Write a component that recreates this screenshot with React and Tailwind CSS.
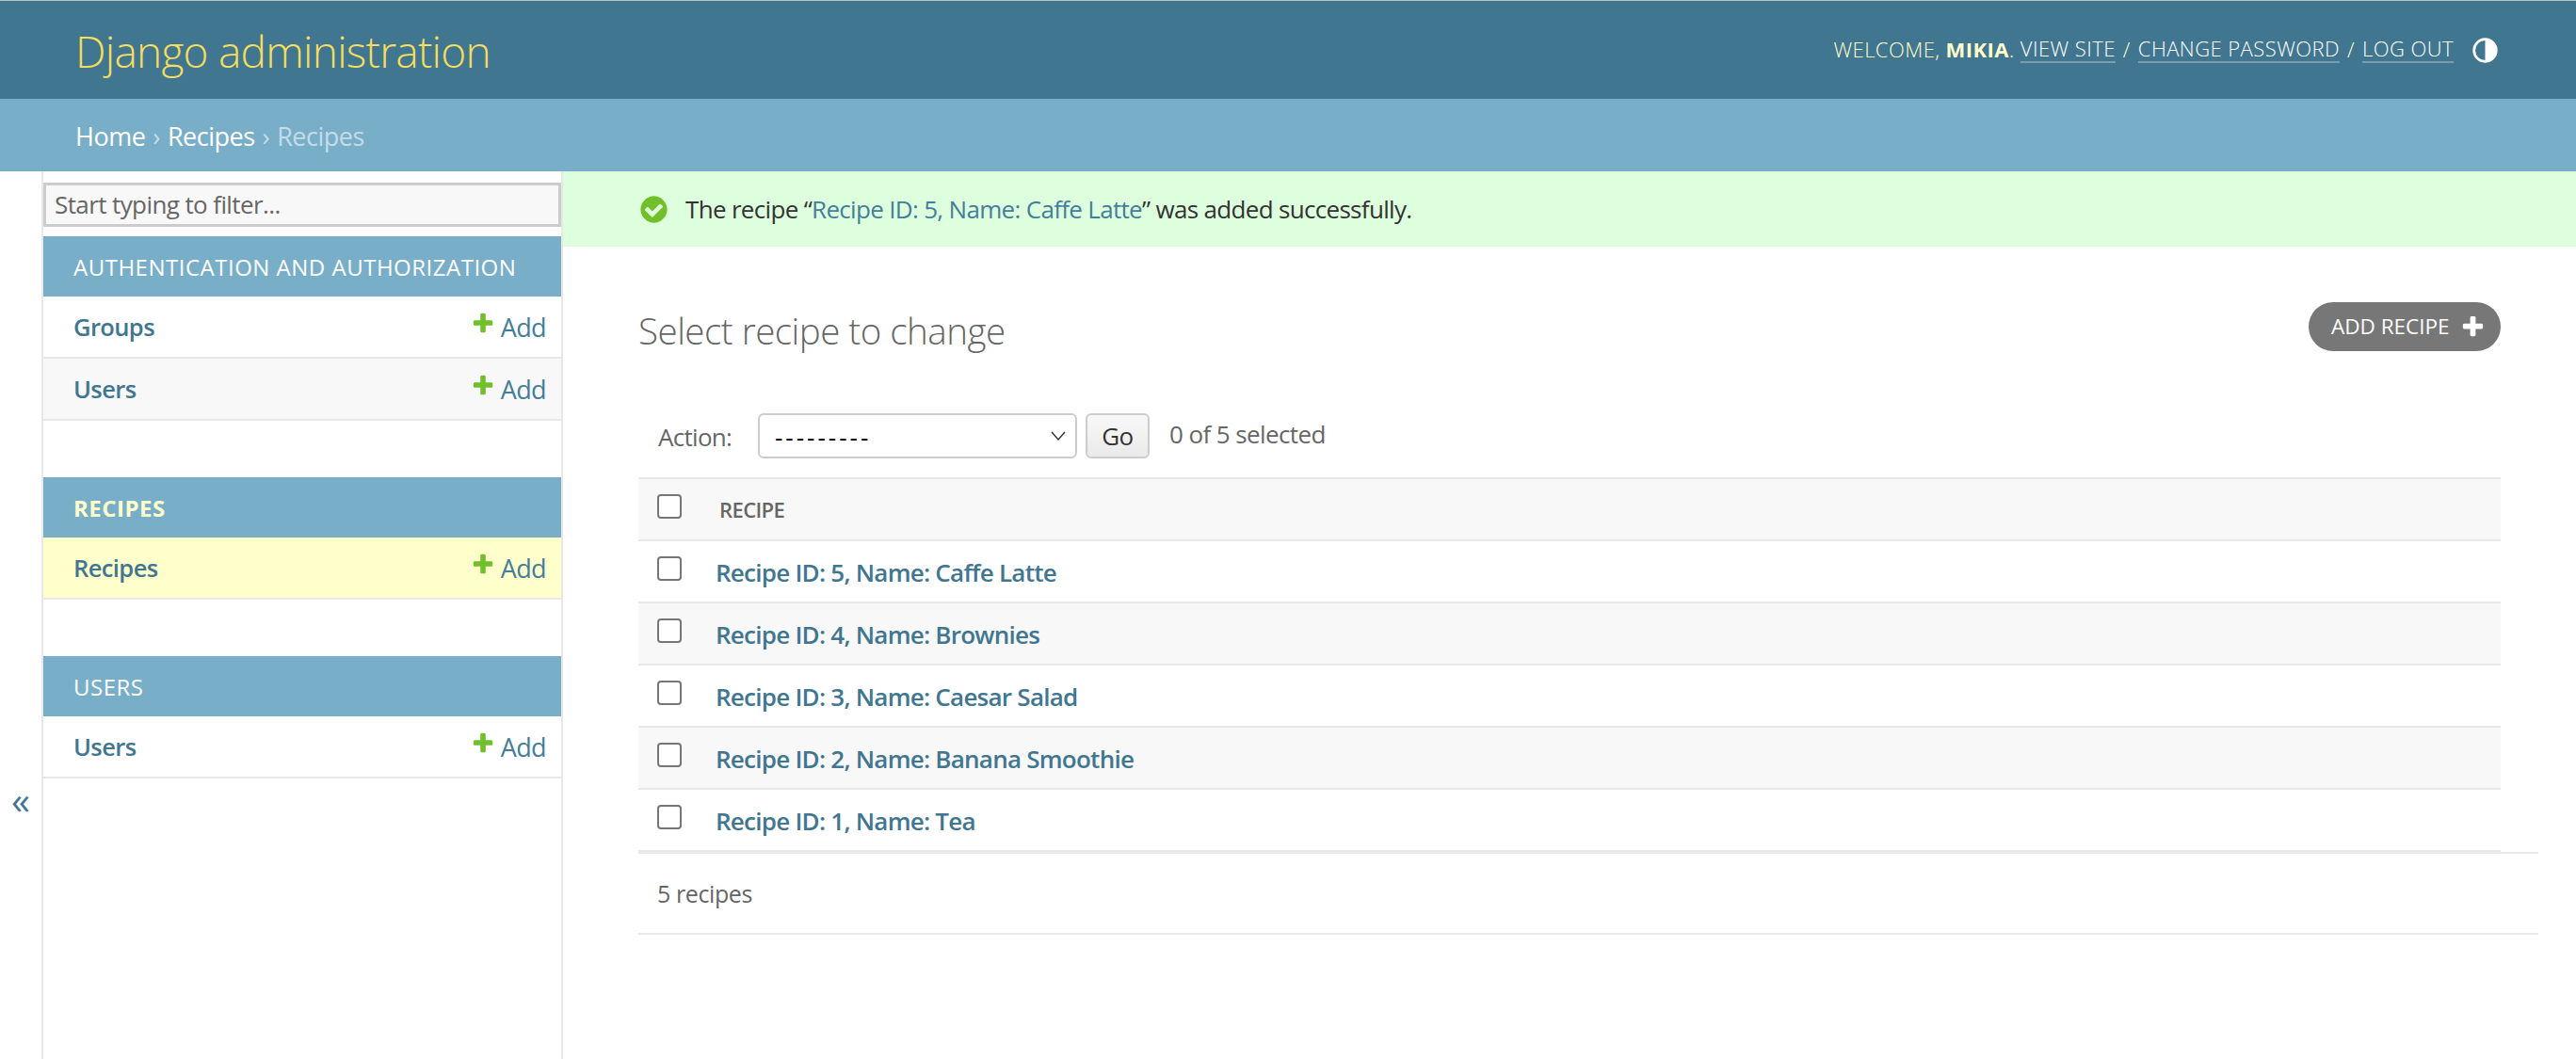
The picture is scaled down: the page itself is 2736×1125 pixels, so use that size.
import React from 'react';

const sans = "font-['Open_Sans',sans-serif]";

const PlusIcon = ({ className }) => (
  <svg viewBox="0 0 1792 1792" className={className}>
    <path fill="currentColor" d="M1600 736v192q0 40-28 68t-68 28h-416v416q0 40-28 68t-68 28h-192q-40 0-68-28t-28-68v-416h-416q-40 0-68-28t-28-68v-192q0-40 28-68t68-28h416v-416q0-40 28-68t68-28h192q40 0 68 28t28 68v416h416q40 0 68 28t28 68z" />
  </svg>
);

const CheckCircle = () => (
  <svg viewBox="0 0 1792 1792" className="w-[33px] h-[33px] text-[#70bf2b]">
    <path fill="currentColor" d="M1412 734q0-28-18-46l-91-90q-19-19-45-19t-45 19l-408 407-226-226q-19-19-45-19t-45 19l-91 90q-18 18-18 46 0 27 18 45l362 362q19 19 45 19 27 0 46-19l543-543q18-18 18-45zm252 162q0 209-103 385.500t-279.500 279.500-385.500 103-385.500-103-279.500-279.500-103-385.500 103-385.500 279.500-279.500 385.500-103 385.500 103 279.500 279.500 103 385.500z" />
  </svg>
);

const ThemeIcon = () => (
  <svg viewBox="0 0 24 24" className="w-[27px] h-[27px] ml-5 mt-[3px] text-white">
    <circle cx="12" cy="12" r="10.5" fill="none" stroke="currentColor" strokeWidth="2.4" />
    <path fill="currentColor" d="M12 2a10 10 0 0 1 0 20z" />
  </svg>
);

const NavRow = ({ label, shade, active }) => (
  <div className={`h-[66px] flex items-center justify-between pl-8 pr-4 border-b-2 border-[#e8e8e8] ${active ? 'bg-[#ffffcc]' : shade ? 'bg-[#f8f8f8]' : 'bg-white'}`}>
    <span className="text-[25.5px] font-semibold text-[#417690] tracking-[-0.6px]">{label}</span>
    <span className="flex items-center text-[27px] text-[#447e9b] tracking-[-0.6px] mt-[2px]">
      <PlusIcon className="w-[26px] h-[26px] mr-[6px] -mt-[9px] text-[#70bf2b]" />
      Add
    </span>
  </div>
);

const NavGroup = ({ title, current, children }) => (
  <div className="mb-[60px]">
    <div className={`h-16 bg-[#79aec8] flex items-center pl-8 pt-[2px] text-[24px] ${current ? 'font-bold text-[#ffffcc]' : 'text-white'} tracking-[0.5px]`}>{title}</div>
    {children}
  </div>
);

const recipes = [
  'Recipe ID: 5, Name: Caffe Latte',
  'Recipe ID: 4, Name: Brownies',
  'Recipe ID: 3, Name: Caesar Salad',
  'Recipe ID: 2, Name: Banana Smoothie',
  'Recipe ID: 1, Name: Tea',
];

const Checkbox = () => (
  <span className="block w-[26px] h-[26px] -mt-[6px] rounded-[4px] border-2 border-[#767676] bg-white" />
);

export default function App() {
  return (
    <div className={`${sans} h-[1125px] overflow-hidden bg-white text-[#333]`}>
      <div className="h-px bg-[#b8c0c4]" />
      <header className="h-[104px] bg-[#417690] flex items-center justify-between pl-20 pr-[83px]">
        <h1 className="text-[46px] font-light text-[#f5dd5d] tracking-[-0.75px] pt-[3px]">Django administration</h1>
        <div className="flex items-center text-[22px] font-light text-[#ffffcc] tracking-[0.45px] -mt-[2px]">
          <span>WELCOME, <strong className="font-bold">MIKIA</strong>.&nbsp;</span>
          <span className="text-white border-b-2 border-[#7a9cae] leading-7">VIEW SITE</span>
          <span className="mx-2">/</span>
          <span className="text-white border-b-2 border-[#7a9cae] leading-7">CHANGE PASSWORD</span>
          <span className="mx-2">/</span>
          <span className="text-white border-b-2 border-[#7a9cae] leading-7">LOG OUT</span>
          <ThemeIcon />
        </div>
      </header>
      <nav className="h-[77px] bg-[#79aec8] flex items-center pl-20 pt-[3px] text-[27px] text-white tracking-[-0.5px]">
        <span>Home</span>
        <span className="mx-2 text-[#c4dce8]">›</span>
        <span>Recipes</span>
        <span className="mx-2 text-[#c4dce8]">›</span>
        <span className="text-[#c4dce8]">Recipes</span>
      </nav>
      <div className="flex h-[943px]">
        <div className="w-11 shrink-0 flex justify-center text-[#417690] text-[40px] leading-none pt-[648px]">
          <span>«</span>
        </div>
        <aside className="w-[554px] shrink-0 border-x-2 border-[#e8e8e8] pt-3">
          <div className="h-[47px] border-[3px] border-[#cccccc] bg-[#f8f8f8] flex items-center pl-[9px] text-[26px] text-[#666] tracking-[-0.6px] mb-[10px]">Start typing to filter...</div>
          <NavGroup title="AUTHENTICATION AND AUTHORIZATION">
            <NavRow label="Groups" />
            <NavRow label="Users" shade />
          </NavGroup>
          <NavGroup title="RECIPES" current>
            <NavRow label="Recipes" active />
          </NavGroup>
          <NavGroup title="USERS">
            <NavRow label="Users" />
          </NavGroup>
        </aside>
        <main className="flex-1 min-w-0">
          <div className="h-20 bg-[#dfd] flex items-center pl-20 text-[26px] text-[#333] tracking-[-0.68px]">
            <CheckCircle />
            <span className="ml-[17px]">The recipe “<span className="text-[#447e9b]">Recipe ID: 5, Name: Caffe Latte</span>” was added successfully.</span>
          </div>
          <div className="pl-20 pr-10 pt-[59px]">
            <div className="flex items-center justify-between pr-10 h-[52px]">
              <h2 className="text-[38.5px] font-light text-[#666] tracking-[-0.5px] mt-[10px]">Select recipe to change</h2>
              <span className="w-[204px] h-[52px] pl-6 rounded-[26px] bg-[#777] text-white text-[22.5px] flex items-center">
                ADD RECIPE
                <PlusIcon className="w-[27px] h-[27px] ml-[11px]" />
              </span>
            </div>
            <div className="mt-[66px] h-[48px] flex items-center pl-[21px]">
              <span className="text-[26px] text-[#666] tracking-[-0.7px] w-[106px] mt-[2px]">Action:</span>
              <div className="w-[339px] h-12 rounded-[6px] border-2 border-[#ccc] bg-white flex items-center justify-between pl-4 pr-[10px] text-[26px] tracking-[3px] text-black">
                <span className="mt-[2px]">---------</span>
                <svg viewBox="0 0 16 10" className="w-4 h-[10px]"><path d="M1 1l7 8 7-8" fill="none" stroke="#333" strokeWidth="1.4" /></svg>
              </div>
              <div className="ml-[9px] w-[68px] h-12 rounded-[6px] border-2 border-[#ccc] bg-gradient-to-b from-[#f8f8f8] to-[#eaeaea] flex items-center justify-center text-[26px] text-[#333] tracking-[-0.6px]">Go</div>
              <span className="ml-[21px] text-[26px] text-[#666] tracking-[-0.6px] -mt-[4px]">0 of 5 selected</span>
            </div>
            <div className="mt-5 border-b-2 border-[#e8e8e8]">
              <div className="mr-10">
                <div className="h-[68px] flex items-center bg-[#f8f8f8] border-y-2 border-[#e8e8e8] pl-[20px]">
                  <Checkbox />
                  <span className="ml-10 text-[22px] font-semibold text-[#666] tracking-[-0.6px] mt-[1px]">RECIPE</span>
                </div>
                {recipes.map((r, i) => (
                  <div key={r} className={`h-[66px] flex items-center pl-[20px] border-b-2 border-[#e8e8e8] ${i % 2 ? 'bg-[#f8f8f8]' : 'bg-white'}`}>
                    <Checkbox />
                    <span className="ml-9 text-[26px] font-semibold text-[#417690] tracking-[-0.75px] mt-[3px]">{r}</span>
                  </div>
                ))}
              </div>
            </div>
            <div className="h-[86px] border-b-2 border-[#e8e8e8] flex items-center pl-5 pt-[2px] text-[25px] text-[#666] tracking-[-0.4px]">5 recipes</div>
          </div>
        </main>
      </div>
    </div>
  );
}
